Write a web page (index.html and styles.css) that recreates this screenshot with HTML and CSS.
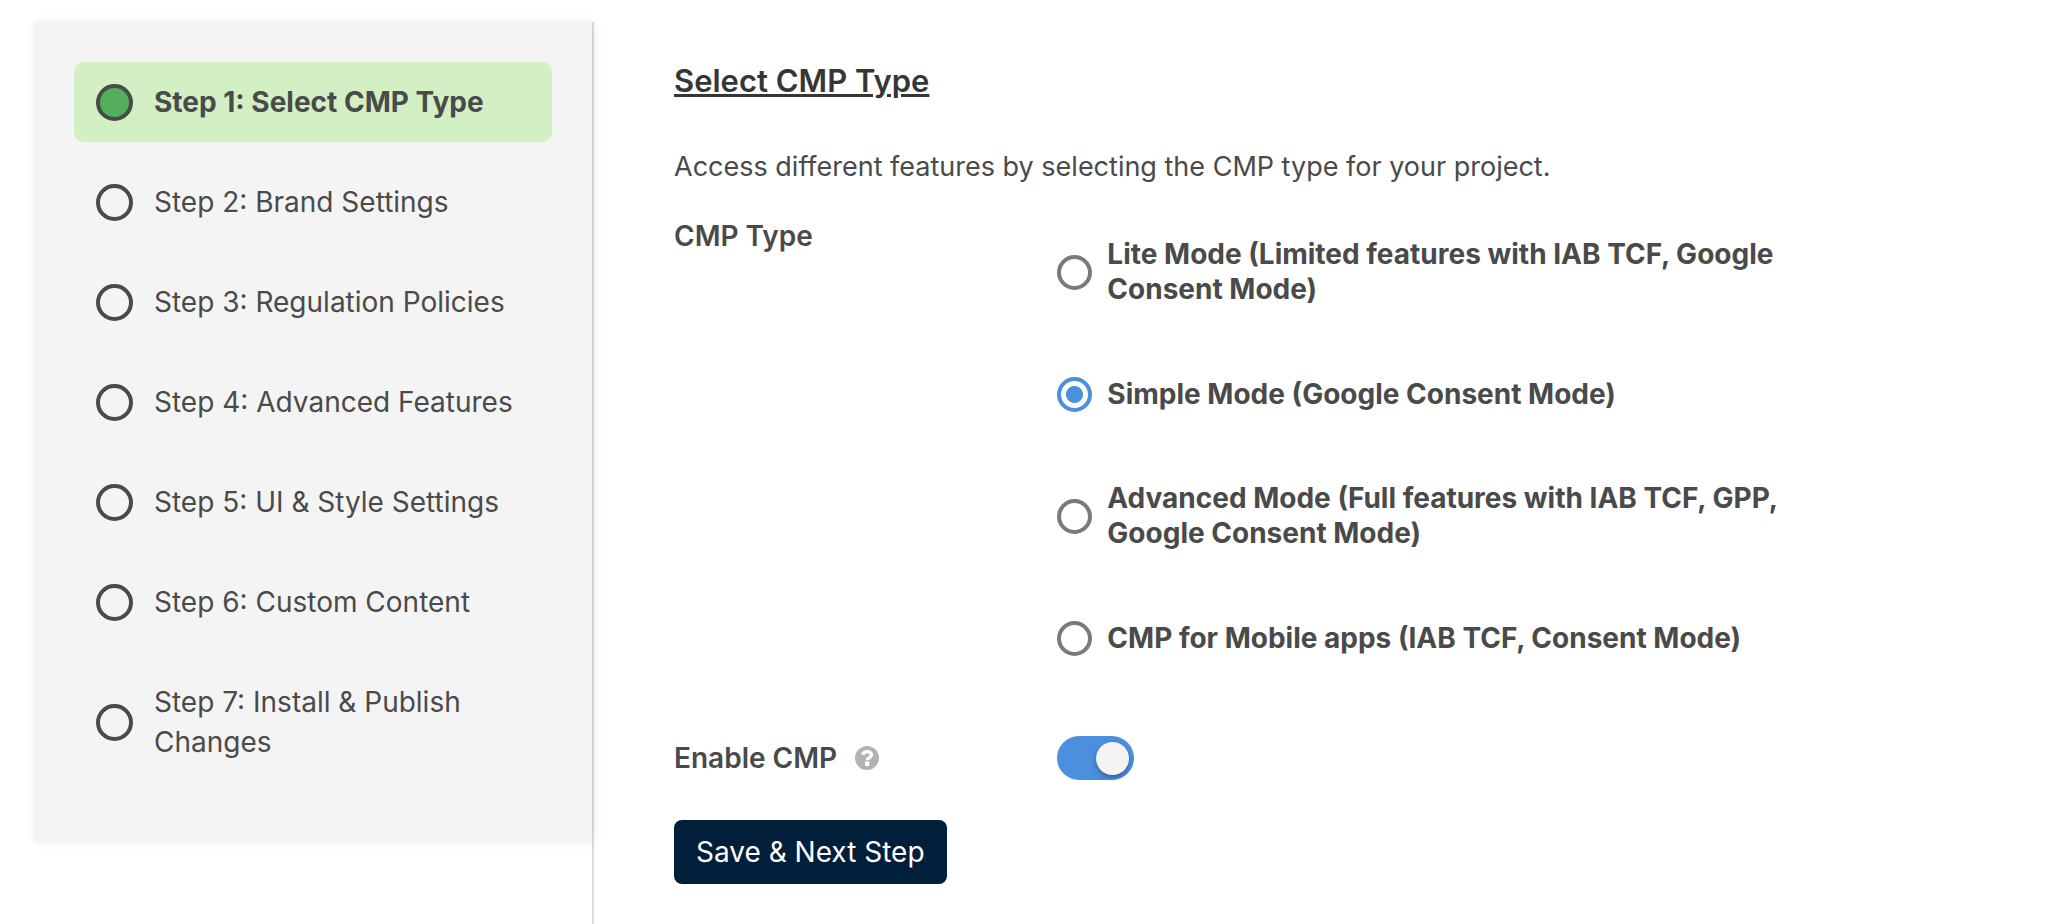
FILE: index.html
```html
<!DOCTYPE html>
<html lang="en">
<head>
<meta charset="utf-8">
<meta name="viewport" content="width=device-width, initial-scale=1">
<title>Select CMP Type</title>
<link rel="stylesheet" href="styles.css">
</head>
<body>
<div class="layout">
  <div class="side">
    <nav class="steps" aria-label="Setup steps">
      <a class="step step-active" href="#step-1" aria-current="step"><span class="dot"></span><span>Step 1: Select CMP Type</span></a>
      <a class="step" href="#step-2"><span class="dot"></span><span>Step 2: Brand Settings</span></a>
      <a class="step" href="#step-3"><span class="dot"></span><span>Step 3: Regulation Policies</span></a>
      <a class="step" href="#step-4"><span class="dot"></span><span>Step 4: Advanced Features</span></a>
      <a class="step" href="#step-5"><span class="dot"></span><span>Step 5: UI &amp; Style Settings</span></a>
      <a class="step" href="#step-6"><span class="dot"></span><span>Step 6: Custom Content</span></a>
      <a class="step" href="#step-7"><span class="dot"></span><span>Step 7: Install &amp; Publish Changes</span></a>
    </nav>
  </div>
  <main class="content">
    <h1 class="title">Select CMP Type</h1>
    <p class="intro">Access different features by selecting the CMP type for your project.</p>
    <form class="form">
      <div class="field">
        <span class="label" id="type-label">CMP Type</span>
        <div class="options" role="radiogroup" aria-labelledby="type-label">
          <label class="option"><input class="radio" type="radio" name="type"><span>Lite Mode (Limited features with IAB TCF, Google Consent Mode)</span></label>
          <label class="option"><input class="radio" type="radio" name="type" checked><span>Simple Mode (Google Consent Mode)</span></label>
          <label class="option"><input class="radio" type="radio" name="type"><span>Advanced Mode (Full features with IAB TCF, GPP, Google Consent Mode)</span></label>
          <label class="option"><input class="radio" type="radio" name="type"><span>CMP for Mobile apps (IAB TCF, Consent Mode)</span></label>
        </div>
      </div>
      <div class="field field-toggle">
        <div class="label-row">
          <label class="label" for="enable">Enable CMP</label>
          <svg class="help" viewBox="0 0 24 24" role="img" aria-label="Help">
            <circle cx="12" cy="12" r="12" fill="#b2b2b2"/>
            <path d="M7.6 8.6C8.4 6.6 10 5.6 12.1 5.6c2.5 0 4.4 1.5 4.4 3.5 0 2.8-4.2 2.6-4.2 5.1" fill="none" stroke="#fff" stroke-width="3.4"/>
            <rect x="10" y="15.6" width="4.4" height="4.4" rx=".5" fill="#fff"/>
          </svg>
        </div>
        <input class="toggle" id="enable" type="checkbox" role="switch" checked>
      </div>
      <button class="save" type="button">Save &amp; Next Step</button>
    </form>
  </main>
</div>
</body>
</html>
```
FILE: styles.css
```css
* { box-sizing: border-box; }

body {
  margin: 0;
  background: #fff;
  color: #4a4a4a;
  font-family: Inter, "Liberation Sans", sans-serif;
  font-size: 28px;
  line-height: 40px;
}

.layout {
  display: grid;
  grid-template-columns: 560px 1fr;
  min-height: 100vh;
  padding: 22px 34px 0;
}

.side { border-right: 2px solid #dbdbdb; }

.steps {
  display: flex;
  flex-direction: column;
  gap: 20px;
  padding: 40px 40px 60px;
  background: #f4f4f4;
  box-shadow: 2px 0 10px rgba(0, 0, 0, 0.08);
}

.step {
  display: flex;
  align-items: center;
  gap: 21px;
  padding: 20px 22px;
  border-radius: 10px;
  color: inherit;
  text-decoration: none;
}

.step-active {
  background: #d2f0c4;
  font-weight: 700;
}

.dot {
  flex: none;
  width: 37px;
  height: 37px;
  border: 4px solid #4a4a4a;
  border-radius: 50%;
}

.step-active .dot { background: #53af5c; }

.content { padding: 39px 192px 40px 80px; }

.title {
  margin: 0 0 46px;
  color: #363636;
  font-size: 31px;
  font-weight: 600;
  text-decoration: underline;
}

.intro {
  margin: 0 0 29px;
  font-size: 27px;
}

.field {
  display: grid;
  grid-template-columns: 1fr 2fr;
}

.label { font-weight: 600; }

.options {
  display: grid;
  grid-auto-rows: 1fr;
  gap: 52px;
  padding-top: 21px;
}

.option {
  display: flex;
  align-items: center;
  gap: 15px;
  font-weight: 700;
  line-height: 35px;
}

.radio {
  flex: none;
  appearance: none;
  width: 35px;
  height: 35px;
  margin: 0;
  border: 4px solid #7a7a7a;
  border-radius: 50%;
}

.radio:checked {
  border-color: #4c8fde;
  background: radial-gradient(circle, #4c8fde 8px, transparent 9px);
}

.field-toggle {
  align-items: center;
  margin: 63px 0 40px;
}

.label-row {
  display: flex;
  align-items: center;
  gap: 18px;
}

.help {
  width: 24px;
  height: 24px;
}

.toggle {
  appearance: none;
  display: flex;
  align-items: center;
  justify-content: flex-end;
  width: 77px;
  height: 44px;
  margin: 0;
  padding: 0 5px;
  border-radius: 22px;
  background: #4c8fde;
}

.toggle::before {
  content: "";
  width: 33px;
  height: 33px;
  border-radius: 50%;
  background: #f4f4f4;
  box-shadow: 0 3px 5px rgba(0, 0, 0, 0.3);
}

.toggle:not(:checked) {
  justify-content: flex-start;
  background: #b2b2b2;
}

.save {
  padding: 12px 22px;
  border: 0;
  border-radius: 8px;
  background: #011e3b;
  color: #fff;
  font: inherit;
}
```
